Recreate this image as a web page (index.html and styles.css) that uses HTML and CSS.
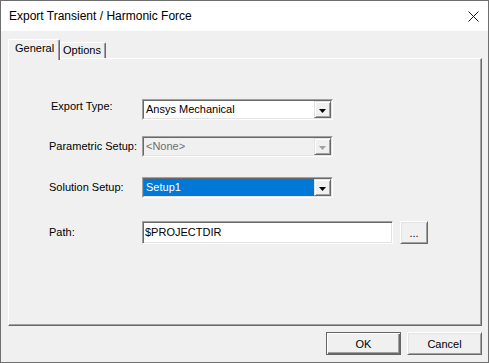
FILE: index.html
```html
<!DOCTYPE html>
<html lang="en">
<head>
  <meta charset="UTF-8" />
  <meta name="viewport" content="width=device-width, initial-scale=1.0" />
  <title>Export Transient / Harmonic Force</title>
  <link rel="stylesheet" href="styles.css">
</head>
<body>
  <div class="window">
    <div class="titlebar">
      <span class="title">Export Transient / Harmonic Force</span>
      <svg class="close" width="11" height="11" viewBox="0 0 11 11">
        <path d="M0.5 0.5L10.5 10.5M10.5 0.5L0.5 10.5" stroke="#1a1a1a" stroke-width="1" />
      </svg>
    </div>

    <div class="content">
      <div class="tabs">
        <div class="tab tab-general">General</div>
        <div class="tab tab-options">Options</div>
      </div>

      <div class="panel">
        <div class="row">
          <span class="label raised">Export Type:</span>
          <div class="combo">
            <div class="combo-field">
              <span class="combo-value">Ansys Mechanical</span>
              <span class="combo-btn"><svg width="7" height="4" viewBox="0 0 7 4"><path d="M0 0H7L3.5 4Z" fill="#000" /></svg></span>
            </div>
          </div>
        </div>

        <div class="row row-param">
          <span class="label">Parametric Setup:</span>
          <div class="combo disabled">
            <div class="combo-field">
              <span class="combo-value">&lt;None&gt;</span>
              <span class="combo-btn"><svg width="7" height="4" viewBox="0 0 7 4"><path d="M0 0H7L3.5 4Z" fill="#a0a0a0" /></svg></span>
            </div>
          </div>
        </div>

        <div class="row row-solution">
          <span class="label">Solution Setup:</span>
          <div class="combo">
            <div class="combo-field">
              <span class="combo-value selected">Setup1</span>
              <span class="combo-btn"><svg width="7" height="4" viewBox="0 0 7 4"><path d="M0 0H7L3.5 4Z" fill="#000" /></svg></span>
            </div>
          </div>
        </div>

        <div class="row row-path">
          <span class="label">Path:</span>
          <div class="input">$PROJECTDIR</div>
          <button class="btn browse">...</button>
        </div>
      </div>

      <div class="footer">
        <button class="btn btn-default">OK</button>
        <button class="btn">Cancel</button>
      </div>
    </div>
  </div>
</body>
</html>
```

FILE: styles.css
```css
body {
  margin: 0;
  font-family: "Liberation Sans", Arial, sans-serif;
  font-size: 11px;
  color: #000;
  background-color: #f0f0f0;
}
.window {
  width: 489px;
  height: 363px;
  box-sizing: border-box;
  border: 1px solid #6f6f6f;
  display: flex;
  flex-direction: column;
  background-color: #f0f0f0;
}
.titlebar {
  height: 30px;
  flex-shrink: 0;
  background-color: #fff;
  display: flex;
  align-items: center;
  justify-content: space-between;
  padding: 0 9px 0 8px;
  font-size: 12px;
}
.close {
  display: block;
}
.content {
  flex: 1;
  display: flex;
  flex-direction: column;
  padding: 8px 6px 7px 7px;
}
.tabs {
  display: flex;
  align-items: flex-end;
  height: 19px;
  flex-shrink: 0;
}
.tab {
  box-sizing: border-box;
  height: 16px;
  line-height: 13px;
  background-color: #f0f0f0;
  border-top: 1px solid #fff;
  border-left: 1px solid #fff;
  border-right: 1px solid #696969;
  border-radius: 2px 2px 0 0;
  box-shadow: inset -1px 0 #a0a0a0;
}
.tab-general {
  width: 52px;
  height: 21px;
  padding: 2px 0 0 6px;
  margin-bottom: -2px;
  position: relative;
  z-index: 1;
}
.tab-options {
  width: 46px;
  padding: 1px 0 0 2px;
}
.panel {
  flex: 1;
  box-sizing: border-box;
  border: 1px solid;
  border-color: #fff #696969 #696969 #fff;
  box-shadow: inset -1px -1px #a0a0a0;
  padding: 40px 0 0 40px;
}
.row {
  display: flex;
  align-items: center;
  height: 21px;
}
.row-param {
  margin-top: 16px;
}
.row-solution {
  margin-top: 20px;
}
.row-path {
  margin-top: 23px;
  height: 23px;
}
.label {
  width: 93px;
  flex-shrink: 0;
  box-sizing: border-box;
  line-height: 13px;
}
.label.raised {
  padding-left: 2px;
  margin-bottom: 6px;
}
.combo {
  width: 191px;
  height: 21px;
  box-sizing: border-box;
  border: 1px solid;
  border-color: #a0a0a0 #fff #fff #a0a0a0;
  display: flex;
}
.combo-field {
  flex: 1;
  display: flex;
  border: 1px solid;
  border-color: #696969 #e3e3e3 #e3e3e3 #696969;
  background-color: #fff;
}
.combo-value {
  flex: 1;
  padding-left: 2px;
  line-height: 17px;
}
.combo-value.selected {
  background-color: #0078d7;
  color: #fff;
}
.combo.disabled .combo-field {
  background-color: #f0f0f0;
}
.combo.disabled .combo-value {
  color: #6d6d6d;
}
.combo-btn {
  width: 17px;
  box-sizing: border-box;
  border: 1px solid;
  border-color: #e3e3e3 #696969 #696969 #e3e3e3;
  box-shadow: inset 1px 1px #fff, inset -1px -1px #a0a0a0;
  background-color: #f0f0f0;
  display: flex;
  align-items: center;
  justify-content: center;
  padding-top: 2px;
}
.combo-btn svg {
  display: block;
}
.input {
  width: 251px;
  height: 23px;
  box-sizing: border-box;
  border: 1px solid;
  border-color: #a0a0a0 #fff #fff #a0a0a0;
  box-shadow: inset 1px 1px #696969, inset -1px -1px #e3e3e3;
  background-color: #fff;
  padding-left: 2px;
  line-height: 20px;
}
.btn {
  box-sizing: border-box;
  width: 75px;
  height: 23px;
  padding: 0;
  font: inherit;
  color: #000;
  background-color: #f0f0f0;
  border: 1px solid;
  border-color: #fff #696969 #696969 #fff;
  box-shadow: inset 1px 1px #e3e3e3, inset -1px -1px #a0a0a0;
}
.btn-default {
  border-color: #646464;
  box-shadow: inset 1px 1px #fff, inset -1px -1px #696969, inset -2px -2px #a0a0a0;
}
.browse {
  width: 28px;
  margin-left: 7px;
}
.footer {
  display: flex;
  justify-content: flex-end;
  gap: 6px;
  margin-top: 6px;
}
```
